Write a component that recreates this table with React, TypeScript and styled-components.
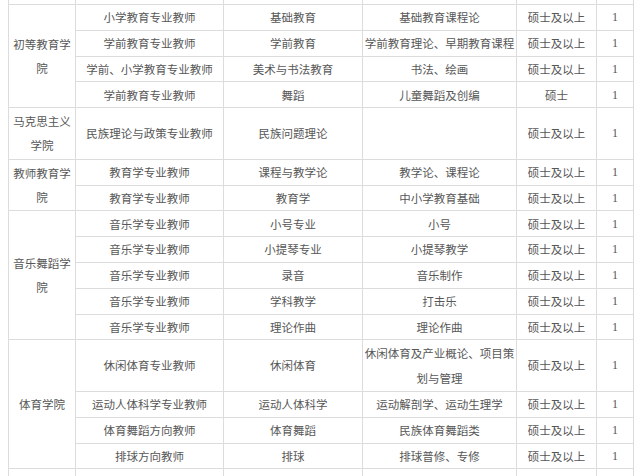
import React from "react";
import styled, { createGlobalStyle } from "styled-components";

const GlobalStyle = createGlobalStyle`
  html, body { margin: 0; padding: 0; background: #ffffff; }
  body { overflow: hidden; }
`;

const Page = styled.div`
  width: 640px;
  height: 476px;
  overflow: hidden;
  padding-left: 8px;
  box-sizing: border-box;
  background: #ffffff;
`;

const Table = styled.table`
  border-collapse: collapse;
  table-layout: fixed;
  width: 625px;
  margin-top: -21.8px;
  font-family: "Noto Sans CJK SC", "Microsoft YaHei", sans-serif;
  font-size: 11.5px;
  color: #575757;
`;

const Row = styled.tr<{ $tall?: boolean }>`
  height: ${(p) => (p.$tall ? "51.6px" : "25.8px")};
`;

const Cell = styled.td<{ $num?: boolean }>`
  border: 1px solid #dcdcdc;
  padding: 0 1px;
  text-align: center;
  vertical-align: middle;
  line-height: 24.5px;
  white-space: nowrap;
  overflow: hidden;
  font-family: ${(p) =>
    p.$num ? '"Liberation Serif", "Times New Roman", serif' : "inherit"};
  font-size: ${(p) => (p.$num ? "12px" : "11.5px")};
`;

type Item = {
  position: string;
  major: string;
  direction: React.ReactNode;
  degree: string;
  count: string;
  tall?: boolean;
};

type Group = { college: React.ReactNode; items: Item[] };

const groups: Group[] = [
  {
    college: (
      <>
        初等教育学
        <br />院
      </>
    ),
    items: [
      { position: "小学教育专业教师", major: "基础教育", direction: "基础教育课程论", degree: "硕士及以上", count: "1" },
      { position: "学前教育专业教师", major: "学前教育", direction: "学前教育理论、早期教育课程", degree: "硕士及以上", count: "1" },
      { position: "学前、小学教育专业教师", major: "美术与书法教育", direction: "书法、绘画", degree: "硕士及以上", count: "1" },
      { position: "学前教育专业教师", major: "舞蹈", direction: "儿童舞蹈及创编", degree: "硕士", count: "1" },
    ],
  },
  {
    college: (
      <>
        马克思主义
        <br />学院
      </>
    ),
    items: [
      { position: "民族理论与政策专业教师", major: "民族问题理论", direction: "", degree: "硕士及以上", count: "1", tall: true },
    ],
  },
  {
    college: (
      <>
        教师教育学
        <br />院
      </>
    ),
    items: [
      { position: "教育学专业教师", major: "课程与教学论", direction: "教学论、课程论", degree: "硕士及以上", count: "1" },
      { position: "教育学专业教师", major: "教育学", direction: "中小学教育基础", degree: "硕士及以上", count: "1" },
    ],
  },
  {
    college: (
      <>
        音乐舞蹈学
        <br />院
      </>
    ),
    items: [
      { position: "音乐学专业教师", major: "小号专业", direction: "小号", degree: "硕士及以上", count: "1" },
      { position: "音乐学专业教师", major: "小提琴专业", direction: "小提琴教学", degree: "硕士及以上", count: "1" },
      { position: "音乐学专业教师", major: "录音", direction: "音乐制作", degree: "硕士及以上", count: "1" },
      { position: "音乐学专业教师", major: "学科教学", direction: "打击乐", degree: "硕士及以上", count: "1" },
      { position: "音乐学专业教师", major: "理论作曲", direction: "理论作曲", degree: "硕士及以上", count: "1" },
    ],
  },
  {
    college: "体育学院",
    items: [
      {
        position: "休闲体育专业教师",
        major: "休闲体育",
        direction: (
          <>
            休闲体育及产业概论、项目策
            <br />
            划与管理
          </>
        ),
        degree: "硕士及以上",
        count: "1",
        tall: true,
      },
      { position: "运动人体科学专业教师", major: "运动人体科学", direction: "运动解剖学、运动生理学", degree: "硕士及以上", count: "1" },
      { position: "体育舞蹈方向教师", major: "体育舞蹈", direction: "民族体育舞蹈类", degree: "硕士及以上", count: "1" },
      { position: "排球方向教师", major: "排球", direction: "排球普修、专修", degree: "硕士及以上", count: "1" },
    ],
  },
];

const widths = [67, 148, 139, 154, 80, 37];

const EmptyRow = () => (
  <Row>
    {widths.map((_, i) => (
      <Cell key={i} />
    ))}
  </Row>
);

export default function App() {
  return (
    <>
      <GlobalStyle />
      <Page>
        <Table>
          <colgroup>
            {widths.map((w, i) => (
              <col key={i} style={{ width: w }} />
            ))}
          </colgroup>
          <tbody>
            <EmptyRow />
            {groups.map((g, gi) =>
              g.items.map((it, ii) => (
                <Row key={`${gi}-${ii}`} $tall={it.tall}>
                  {ii === 0 && <Cell rowSpan={g.items.length}>{g.college}</Cell>}
                  <Cell>{it.position}</Cell>
                  <Cell>{it.major}</Cell>
                  <Cell>{it.direction}</Cell>
                  <Cell>{it.degree}</Cell>
                  <Cell $num>{it.count}</Cell>
                </Row>
              ))
            )}
            <EmptyRow />
          </tbody>
        </Table>
      </Page>
    </>
  );
}
